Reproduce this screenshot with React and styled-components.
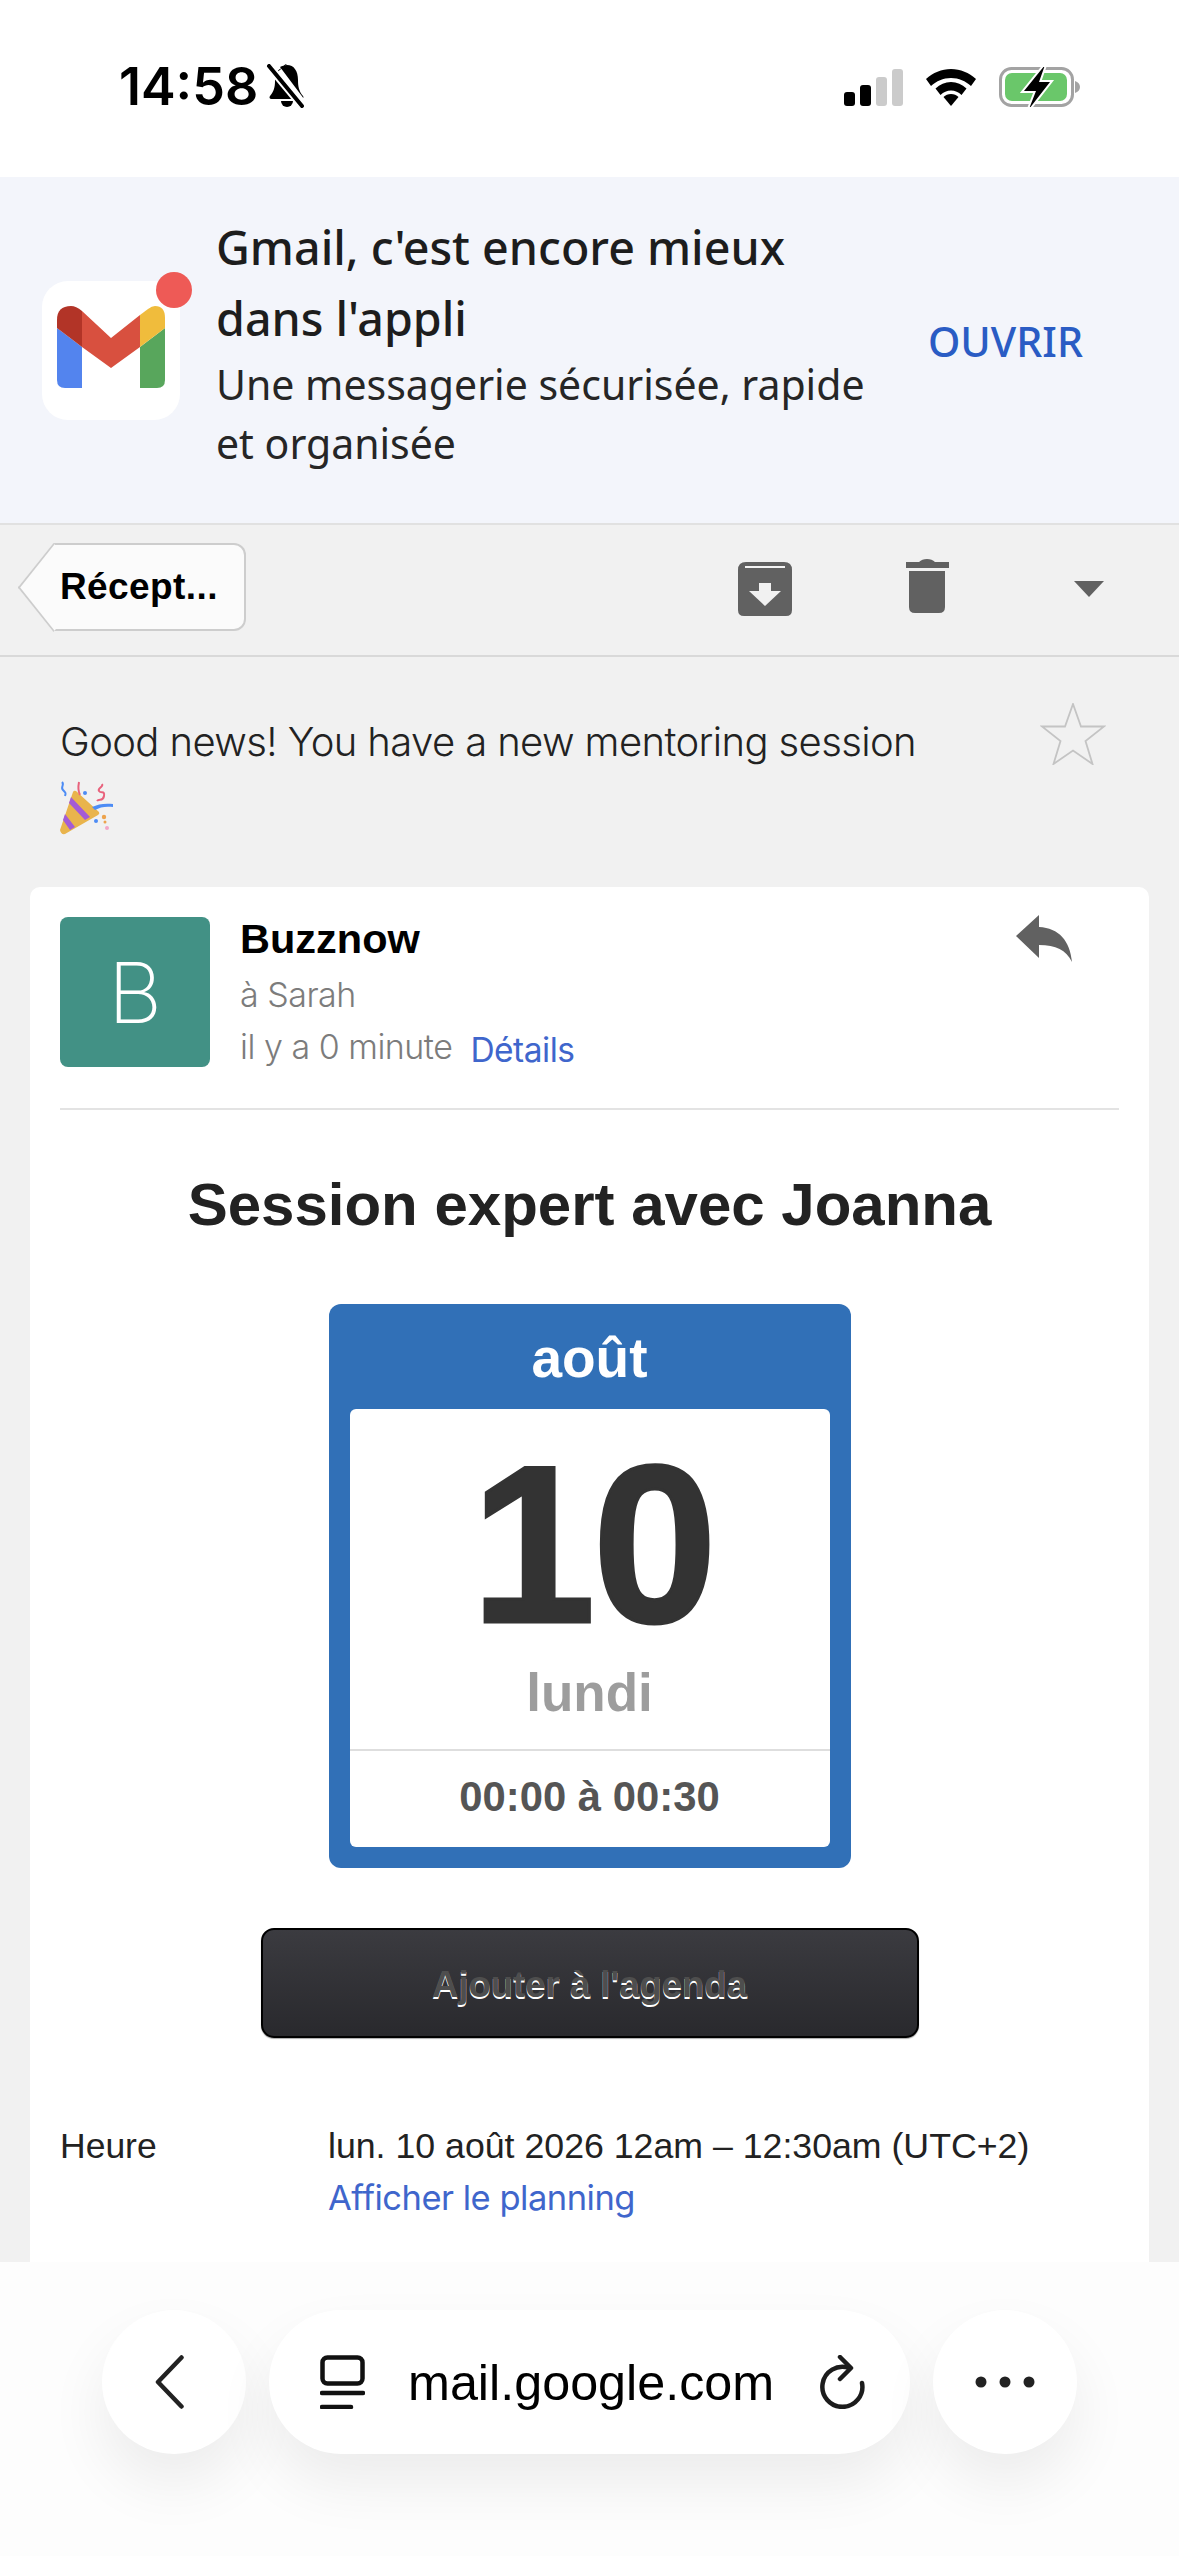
import React from 'react'
import styled, { createGlobalStyle } from 'styled-components'

const Global = createGlobalStyle`
  html, body { margin: 0; padding: 0; background: #fff; }
  * { box-sizing: border-box; }
`

const Page = styled.div`
  width: 1179px;
  height: 2556px;
  display: flex;
  flex-direction: column;
  overflow: hidden;
  background: #f1f1f1;
  font-family: "Liberation Sans", Arial, sans-serif;
`

/* status bar */
const StatusBar = styled.div`
  height: 177px;
  flex-shrink: 0;
  background: #fff;
  display: flex;
  align-items: center;
  justify-content: space-between;
  padding: 0 98px 3px 119px;
`
const StatusGroup = styled.div`
  display: flex;
  align-items: center;
  gap: ${p => p.$gap || 0}px;
`
const Time = styled.span`
  font-family: Inter, sans-serif;
  font-size: 52px;
  font-weight: 600;
  line-height: 50px;
  color: #000;
`
const Bars = styled.div`
  display: flex;
  align-items: flex-end;
  gap: 5px;
  height: 37px;
  margin-left: 2px;
`
const Bar = styled.div`
  width: 11px;
  height: ${p => p.$h}px;
  border-radius: 3px;
  background: ${p => (p.$off ? '#cbcbcb' : '#000')};
`

/* app banner */
const Banner = styled.div`
  height: 348px;
  flex-shrink: 0;
  background: #f3f5fb;
  border-bottom: 2px solid #e1e1e1;
  display: flex;
  align-items: center;
  padding: 0 96px 0 42px;
`
const AppIcon = styled.div`
  position: relative;
  width: 138px;
  height: 139px;
  flex-shrink: 0;
  background: #fff;
  border-radius: 26px;
  display: flex;
  align-items: center;
  justify-content: center;
  margin-right: 37px;
`
const Dot = styled.div`
  position: absolute;
  top: -9px;
  right: -12px;
  width: 36px;
  height: 36px;
  border-radius: 50%;
  background: #ee5a56;
`
const BannerText = styled.div`
  flex: 1;
  padding-bottom: 16px;
  color: #1d1d1d;
  font-family: "Noto Sans", sans-serif;
`
const BannerTitle = styled.div`
  font-size: 46.600px;
  font-weight: 500;
  line-height: 71px;
  margin-left: -1px;
`
const BannerSub = styled.div`
  font-size: 41px;
  line-height: 59px;
  padding-top: 1px;
  color: #262626;
  margin-left: -1px;
`
const OpenLink = styled.span`
  font-family: "Noto Sans", sans-serif;
  font-size: 41.300px;
  font-weight: 500;
  color: #2a5cc4;
  margin-bottom: 18px;
`

/* toolbar */
const Toolbar = styled.div`
  height: 132px;
  flex-shrink: 0;
  border-bottom: 2px solid #d9d9d9;
  display: flex;
  align-items: center;
  padding: 0 75px 0 53px;
`
const BackButton = styled.div`
  position: relative;
  width: 193px;
  height: 88px;
  margin-top: -6px;
  background: #fbfbfb;
  border: 2px solid #cdcdcd;
  border-left: none;
  border-radius: 0 12px 12px 0;
  display: flex;
  align-items: center;
  padding-left: 7px;
  font-size: 37px;
  font-weight: 700;
  letter-spacing: 0.4px;
  color: #000;
  &::before {
    content: '';
    position: absolute;
    top: 11px;
    left: -31px;
    width: 61px;
    height: 61px;
    background: #fbfbfb;
    border-left: 2px solid #cdcdcd;
    border-bottom: 2px solid #cdcdcd;
    transform: scaleX(0.8) rotate(45deg);
  }
`
const BackLabel = styled.span`
  position: relative;
`
const ToolIcons = styled.div`
  margin-left: auto;
  display: flex;
  align-items: center;
  margin-top: -5px;
`

/* subject */
const SubjectRow = styled.div`
  height: 230px;
  flex-shrink: 0;
  display: flex;
  justify-content: space-between;
  padding: 46px 73px 0 60px;
`
const Subject = styled.div`
  width: 890px;
  font-family: Inter, sans-serif;
  font-weight: 300;
  font-size: 40px;
  line-height: 78px;
  letter-spacing: -0.6px;
  color: #222;
`

/* message card */
const Main = styled.div`
  flex: 1;
  min-height: 0;
  padding: 0 30px;
  overflow: hidden;
`
const Card = styled.div`
  background: #fff;
  border-radius: 10px 10px 0 0;
  padding: 30px 30px 0;
  height: 100%;
`
const Header = styled.div`
  display: flex;
  height: 193px;
  border-bottom: 2px solid #e3e3e3;
`
const Avatar = styled.div`
  width: 150px;
  height: 150px;
  flex-shrink: 0;
  border-radius: 8px;
  background: #429185;
  color: #fff;
  font-family: Inter, sans-serif;
  font-weight: 200;
  font-size: 84px;
  display: flex;
  align-items: center;
  justify-content: center;
  margin-right: 30px;
`
const Sender = styled.div`
  flex: 1;
`
const SenderName = styled.div`
  font-size: 41.500px;
  font-weight: 700;
  line-height: 42px;
  color: #000;
  margin-top: 1px;
  margin-bottom: 9px;
`
const Meta = styled.div`
  font-family: Inter, sans-serif;
  font-weight: 300;
  font-size: 34px;
  line-height: 52px;
  letter-spacing: -0.5px;
  color: #7c7c7c;
  display: flex;
  align-items: baseline;
`
const Link = styled.span`
  font-family: Inter, sans-serif;
  font-weight: 400;
  font-size: ${p => p.$size}px;
  letter-spacing: -0.5px;
  color: #3f66cc;
  margin-left: ${p => p.$left || 0}px;
  position: relative;
  top: ${p => p.$down || 0}px;
`
const Title = styled.h1`
  margin: 60px 0 64px;
  font-size: 60px;
  line-height: 70px;
  font-weight: 700;
  text-align: center;
  color: #222;
`
const Calendar = styled.div`
  width: 522px;
  height: 564px;
  margin: 0 auto;
  background: #3170b7;
  border-radius: 12px;
  padding: 0 21px 21px;
  display: flex;
  flex-direction: column;
`
const Month = styled.div`
  height: 105px;
  padding-top: 2px;
  flex-shrink: 0;
  display: flex;
  align-items: center;
  justify-content: center;
  color: #fff;
  font-size: 55px;
  font-weight: 700;
`
const Sheet = styled.div`
  flex: 1;
  background: #fff;
  border-radius: 6px;
  display: flex;
  flex-direction: column;
  align-items: center;
`
const DayBlock = styled.div`
  height: 342px;
  width: 100%;
  border-bottom: 2px solid #dedede;
  display: flex;
  flex-direction: column;
  align-items: center;
`
const DayNumber = styled.div`
  font-size: 224px;
  font-weight: 700;
  line-height: 222px;
  letter-spacing: -3px;
  -webkit-text-stroke: 3px #333;
  color: #333;
  margin: 24px 0 0 6px;
`
const Weekday = styled.div`
  font-size: 53px;
  font-weight: 700;
  line-height: 60px;
  color: #9d9d9d;
  margin-top: 8px;
`
const Hours = styled.div`
  flex: 1;
  display: flex;
  align-items: center;
  font-size: 41.800px;
  font-weight: 700;
  color: #555;
  padding-bottom: 5px;
`
const AddButton = styled.div`
  width: 658px;
  height: 110px;
  margin: 60px auto 0;
  border: 2px solid #000;
  border-radius: 13px;
  background: linear-gradient(#3b3b40, #29292d);
  box-shadow: 0 1px 1px #aaa;
  display: flex;
  align-items: center;
  justify-content: center;
  padding-top: 4px;
  color: #4e4e4e;
  font-size: 36.500px;
  font-weight: 700;
  text-shadow: 0 2px 0 #fff;
`
const InfoRow = styled.div`
  display: flex;
  margin-top: 83px;
`
const InfoLabel = styled.div`
  width: 268px;
  font-size: 35.500px;
  line-height: 51px;
  color: #222;
`
const InfoValue = styled.div`
  font-size: 35.700px;
  line-height: 51px;
  color: #222;
`

/* browser bar */
const BrowserBar = styled.div`
  height: 294px;
  flex-shrink: 0;
  background: #fdfdfd;
  display: flex;
  justify-content: center;
  gap: 23px;
  padding-top: 48px;
`
const Pill = styled.div`
  width: ${p => p.$w || 144}px;
  height: 144px;
  border-radius: 72px;
  background: #fff;
  box-shadow: 0 30px 60px rgba(0, 0, 0, 0.07);
  display: flex;
  align-items: center;
  justify-content: ${p => (p.$wide ? 'flex-start' : 'center')};
  padding: ${p => (p.$wide ? '0 45px 0 51px' : '0')};
`
const Address = styled.span`
  flex: 1;
  font-size: 50.300px;
  color: #000;
  margin-left: 43px;
`

const Svg = styled.svg`
  display: block;
  flex-shrink: 0;
  margin: ${p => p.$m || 0};
`

const BellOff = () => (
  <Svg width="42" height="44" viewBox="0 0 42 44" $m="-3px 0 0 8px">
    <path d="M21 0c-2 0-3.500 1.500-3.500 3.500C11 5 9 10.500 9 17c0 6-1 10-5 15-1 1.500-.5 3 1.500 3H28L11.500 8" fill="#000" />
    <path d="M14 3c2-1 4.500-2 7-2 7 0 11 6 11 15 0 7 1 11 5 16 .5.700.5 1.500.3 2" fill="#000" />
    <path d="M15 37h12a6 6 0 0 1-12 0z" fill="#000" />
    <path d="M3 2l34 41" stroke="#fff" strokeWidth="8" />
    <path d="M3 2l33 40" stroke="#000" strokeWidth="4" strokeLinecap="round" />
  </Svg>
)

const Wifi = () => (
  <Svg width="50" height="37" viewBox="0 0 50 37">
    <path d="M25 0c9.500 0 18 3.800 25 10l-5 7c-5.500-5-12-8-20-8S10.500 12 5 17l-5-7C7 3.800 15.500 0 25 0z" />
    <path d="M25 13c6 0 11 2.300 15.500 6.500l-5 6.500c-3-3-6.500-4.500-10.500-4.500S17.500 23 14.500 26l-5-6.500C14 15.300 19 13 25 13z" />
    <path d="M25 25c3 0 5.500 1 7.500 3L25 37l-7.500-9c2-2 4.500-3 7.500-3z" />
  </Svg>
)

const Battery = () => (
  <Svg width="82" height="40" viewBox="0 0 82 40">
    <rect x="1.500" y="1.500" width="72" height="37" rx="11" fill="none" stroke="#a3a3a3" strokeWidth="3" />
    <path d="M76 14c3 1 5 3 5 6s-2 5-5 6z" fill="#a3a3a3" />
    <rect x="6" y="6" width="62" height="28" rx="7" fill="#6ac76a" />
    <path d="M46-2 25 24h12l-7 18 21-27H40z" fill="#000" stroke="#fff" strokeWidth="4" paintOrder="stroke" />
  </Svg>
)

const GmailMark = () => (
  <Svg width="108" height="82" viewBox="0 0 108 82" $m="-6px 0 0 0">
    <path d="M0 22l25 19v41H8q-8 0-8-8z" fill="#5384ee" />
    <path d="M83 41l25-19v52q0 8-8 8H83z" fill="#58a65c" />
    <path d="M0 22v-8Q0 0 14 0q5 0 11 5v36z" fill="#b23427" />
    <path d="M25 5l29 27L83 9v32L54 62 25 41z" fill="#d8503f" />
    <path d="M83 9l8-6q4-3 7-3 10 0 10 12v10L83 41z" fill="#f0bc3c" />
  </Svg>
)

const ArchiveIcon = () => (
  <Svg width="54" height="54" viewBox="0 0 54 54" $m="3px 114px 0 0">
    <path d="M8 0h38q8 0 8 8v40q0 6-6 6H6q-6 0-6-6V8q0-8 8-8z" fill="#616161" />
    <rect x="7" y="4" width="40" height="2" fill="#f4f4f4" />
    <path d="M21 21h12v8h10L27 44 11 29h10z" fill="#f1f1f1" />
  </Svg>
)

const TrashIcon = () => (
  <Svg width="43" height="54" viewBox="0 0 43 54" $m="-3px 125px 0 0">
    <path d="M0 3h13q3-3 8-3t8 3h14v6H0z" fill="#616161" />
    <path d="M3 12h36v36q0 6-6 6H9q-6 0-6-6z" fill="#616161" />
  </Svg>
)

const CaretIcon = () => (
  <Svg width="30" height="16" viewBox="0 0 30 16" $m="3px 0 0 0">
    <path d="M0 0h30L15 16z" fill="#616161" />
  </Svg>
)

const StarIcon = () => (
  <Svg width="66" height="62" viewBox="0 0 66 62">
    <path d="M33 1l8 22.500h23L45.500 38l7 23L33 47.500 13.500 61l7-23L2 23.500h23z" fill="none" stroke="#c4c4c4" strokeWidth="1.800" />
  </Svg>
)

const PartyIcon = () => (
  <Svg width="54" height="54" viewBox="0 0 54 54">
    <path d="M0 49L13 11q1-2 3-1l23 21q1 2-1 3L5 53q-4 1-5-4z" fill="#e9b44c" />
    <path d="M11 16l19 20-5 3L9 22zM5 33l10 13-5 3-7-10z" fill="#a45bd6" />
    <path d="M32 26c6-3 13-4 21-3v3c-7-1-13 0-18 3z" fill="#4d8cf5" />
    <path d="M20 14c-2-4-2-8-1-13M42 3c2 3-5 4-3 7s6-1 5 5-5 2-7 5" fill="none" stroke="#e8627c" strokeWidth="2" />
    <path d="M2 1c3 3-2 5 1 8s3 3 2 6" fill="none" stroke="#4d8cf5" strokeWidth="2" />
    <circle cx="25" cy="12" r="2" fill="#4d8cf5" />
    <circle cx="44" cy="36" r="2.200" fill="#eda34c" />
    <circle cx="36" cy="40" r="2" fill="#4d8cf5" />
    <circle cx="47" cy="47" r="2" fill="#f3a6c8" />
    <circle cx="45" cy="41" r="1.500" fill="#eda34c" />
  </Svg>
)

const ReplyIcon = () => (
  <Svg width="56" height="47" viewBox="0 0 56 47" $m="-2px 47px 0 0">
    <path d="M23 0v12c20 1 31 14 33 35-6-12-16-17-33-17v13L0 21z" fill="#616161" />
  </Svg>
)

const ChevronIcon = () => (
  <Svg width="29" height="54" viewBox="0 0 29 54" fill="none" $m="0 10px 0 0">
    <path d="M26.500 2.500 3 27l23.500 24.500" stroke="#222" strokeWidth="4.500" strokeLinecap="round" strokeLinejoin="round" />
  </Svg>
)

const TabsIcon = () => (
  <Svg width="45" height="54" viewBox="0 0 45 54" fill="none">
    <rect x="2.500" y="2.500" width="40" height="26" rx="5" stroke="#111" strokeWidth="4.500" />
    <path d="M2 38h41M2 52h29" stroke="#111" strokeWidth="4.500" strokeLinecap="round" />
  </Svg>
)

const ReloadIcon = () => (
  <Svg width="46" height="54" viewBox="0 0 46 54" fill="none">
    <path d="M30 13A20 20 0 1 0 43 28" stroke="#1c1c1c" strokeWidth="4.500" strokeLinecap="round" />
    <path d="M21 2l11 11-11 11" stroke="#1c1c1c" strokeWidth="4.500" strokeLinecap="round" strokeLinejoin="round" />
  </Svg>
)

const MoreIcon = () => (
  <Svg width="60" height="12" viewBox="0 0 60 12">
    <circle cx="6" cy="6" r="5.500" fill="#222" />
    <circle cx="30" cy="6" r="5.500" fill="#222" />
    <circle cx="54" cy="6" r="5.500" fill="#222" />
  </Svg>
)

export default function App() {
  return (
    <Page>
      <Global />
      <StatusBar>
        <StatusGroup>
          <Time>14:58</Time>
          <BellOff />
        </StatusGroup>
        <StatusGroup $gap={23}>
          <Bars>
            <Bar $h={14} />
            <Bar $h={21} />
            <Bar $h={29} $off />
            <Bar $h={37} $off />
          </Bars>
          <Wifi />
          <Battery />
        </StatusGroup>
      </StatusBar>

      <Banner>
        <AppIcon>
          <GmailMark />
          <Dot />
        </AppIcon>
        <BannerText>
          <BannerTitle>Gmail, c'est encore mieux<br />dans l'appli</BannerTitle>
          <BannerSub>Une messagerie sécurisée, rapide<br />et organisée</BannerSub>
        </BannerText>
        <OpenLink>OUVRIR</OpenLink>
      </Banner>

      <Toolbar>
        <BackButton><BackLabel>Récept...</BackLabel></BackButton>
        <ToolIcons>
          <ArchiveIcon />
          <TrashIcon />
          <CaretIcon />
        </ToolIcons>
      </Toolbar>

      <SubjectRow>
        <Subject>
          Good news! You have a new mentoring session
          <PartyIcon />
        </Subject>
        <StarIcon />
      </SubjectRow>

      <Main>
        <Card>
          <Header>
            <Avatar>B</Avatar>
            <Sender>
              <SenderName>Buzznow</SenderName>
              <Meta>à Sarah</Meta>
              <Meta>il y a 0 minute<Link $size={33.5} $left={18} $down={3}>Détails</Link></Meta>
            </Sender>
            <ReplyIcon />
          </Header>
          <Title>Session expert avec Joanna</Title>
          <Calendar>
            <Month>août</Month>
            <Sheet>
              <DayBlock>
                <DayNumber>10</DayNumber>
                <Weekday>lundi</Weekday>
              </DayBlock>
              <Hours>00:00 à 00:30</Hours>
            </Sheet>
          </Calendar>
          <AddButton>Ajouter à l'agenda</AddButton>
          <InfoRow>
            <InfoLabel>Heure</InfoLabel>
            <InfoValue>
              lun. 10 août 2026 12am – 12:30am (UTC+2)
              <br />
              <Link $size={34.5}>Afficher le planning</Link>
            </InfoValue>
          </InfoRow>
        </Card>
      </Main>

      <BrowserBar>
        <Pill><ChevronIcon /></Pill>
        <Pill $w={641} $wide>
          <TabsIcon />
          <Address>mail.google.com</Address>
          <ReloadIcon />
        </Pill>
        <Pill><MoreIcon /></Pill>
      </BrowserBar>
    </Page>
  )
}
